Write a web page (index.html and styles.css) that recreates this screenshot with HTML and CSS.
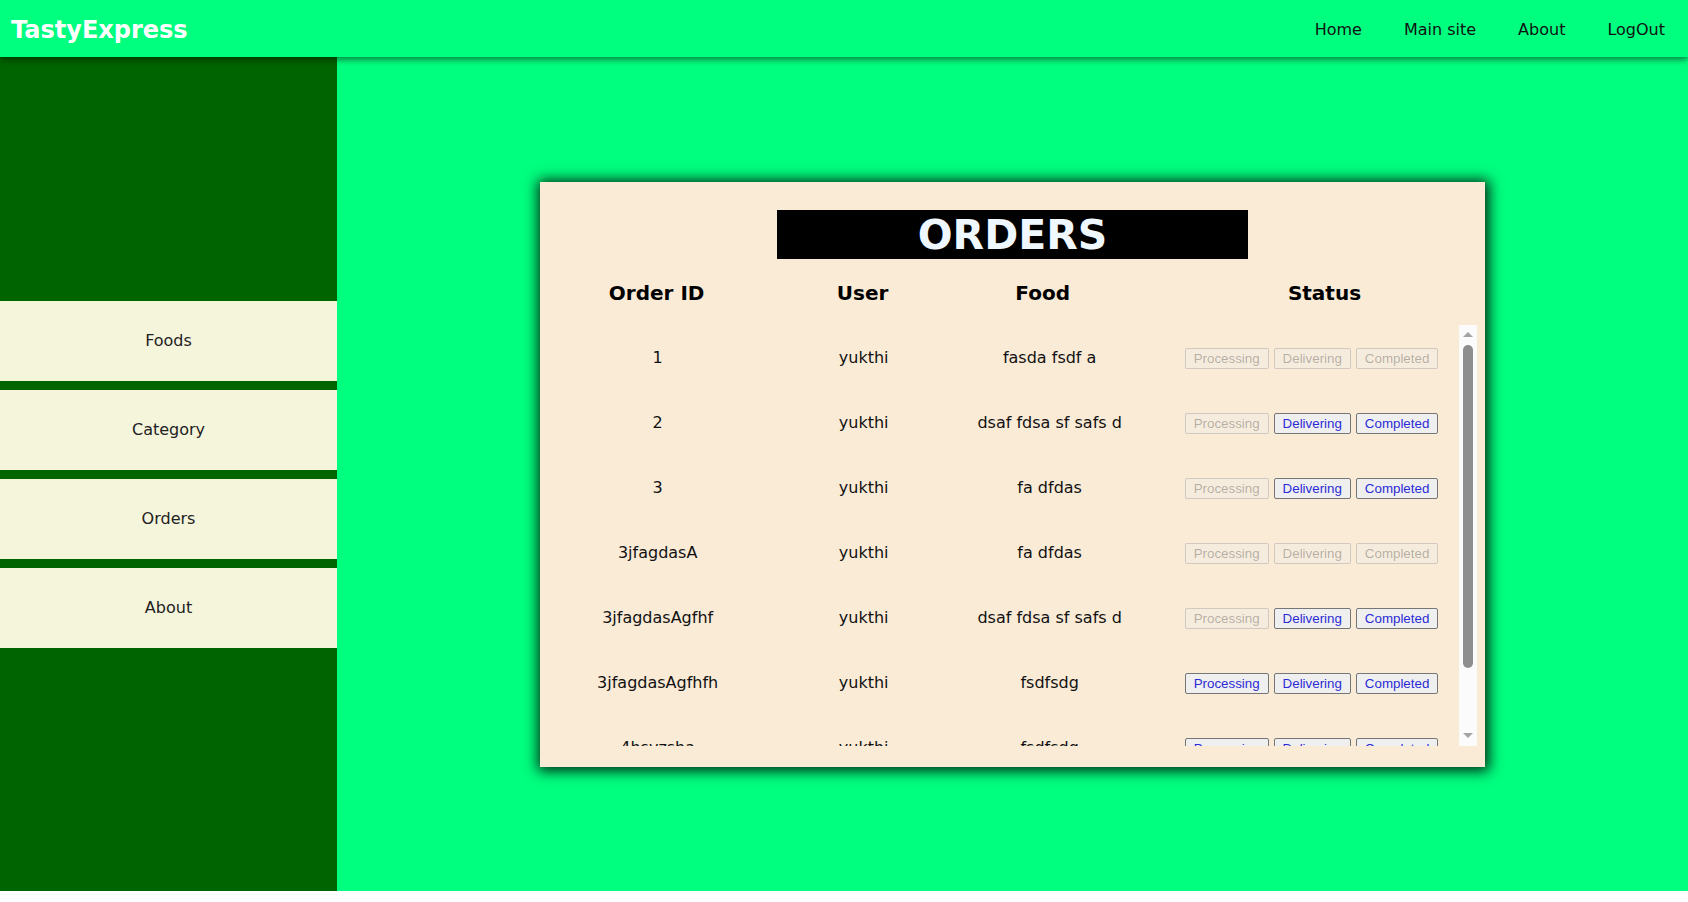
FILE: index.html
```html
<!DOCTYPE html>
<html lang="en">
<head>
<meta charset="utf-8">
<title>TastyExpress - Orders</title>
<link rel="stylesheet" href="styles.css">
</head>
<body>
<header class="topbar">
  <div class="brand">TastyExpress</div>
  <nav class="topnav">
    <a href="#">Home</a>
    <a href="#">Main site</a>
    <a href="#">About</a>
    <a href="#">LogOut</a>
  </nav>
</header>
<div class="layout">
  <aside class="sidebar">
    <a class="side-item" href="#">Foods</a>
    <a class="side-item" href="#">Category</a>
    <a class="side-item" href="#">Orders</a>
    <a class="side-item" href="#">About</a>
  </aside>
  <main class="main">
    <section class="card">
      <h1 class="title">ORDERS</h1>
      <div class="thead">
        <div>Order ID</div>
        <div>User</div>
        <div>Food</div>
        <div class="th-status">Status</div>
      </div>
      <div class="scroll-wrap">
        <div class="tbody">
          <div class="row">
            <div>1</div><div>yukthi</div><div>fasda fsdf a</div>
            <div class="status"><button class="btn" disabled>Processing</button><button class="btn" disabled>Delivering</button><button class="btn" disabled>Completed</button></div>
          </div>
          <div class="row">
            <div>2</div><div>yukthi</div><div>dsaf fdsa sf safs d</div>
            <div class="status"><button class="btn" disabled>Processing</button><button class="btn">Delivering</button><button class="btn">Completed</button></div>
          </div>
          <div class="row">
            <div>3</div><div>yukthi</div><div>fa dfdas</div>
            <div class="status"><button class="btn" disabled>Processing</button><button class="btn">Delivering</button><button class="btn">Completed</button></div>
          </div>
          <div class="row">
            <div>3jfagdasA</div><div>yukthi</div><div>fa dfdas</div>
            <div class="status"><button class="btn" disabled>Processing</button><button class="btn" disabled>Delivering</button><button class="btn" disabled>Completed</button></div>
          </div>
          <div class="row">
            <div>3jfagdasAgfhf</div><div>yukthi</div><div>dsaf fdsa sf safs d</div>
            <div class="status"><button class="btn" disabled>Processing</button><button class="btn">Delivering</button><button class="btn">Completed</button></div>
          </div>
          <div class="row">
            <div>3jfagdasAgfhfh</div><div>yukthi</div><div>fsdfsdg</div>
            <div class="status"><button class="btn">Processing</button><button class="btn">Delivering</button><button class="btn">Completed</button></div>
          </div>
          <div class="row">
            <div>4hsvzsha</div><div>yukthi</div><div>fsdfsdg</div>
            <div class="status"><button class="btn">Processing</button><button class="btn">Delivering</button><button class="btn">Completed</button></div>
          </div>
          <div class="row">
            <div>4hsvzshag</div><div>yukthi</div><div>fa dfdas</div>
            <div class="status"><button class="btn">Processing</button><button class="btn">Delivering</button><button class="btn">Completed</button></div>
          </div>
        </div>
        <div class="scrollbar" aria-hidden="true">
          <span class="sb-arrow sb-up"></span>
          <span class="sb-thumb"></span>
          <span class="sb-arrow sb-down"></span>
        </div>
      </div>
    </section>
  </main>
</div>
</body>
</html>
```
FILE: styles.css
```css
html, body {
  margin: 0;
  padding: 0;
  background: #ffffff;
  font-family: "DejaVu Sans", Verdana, sans-serif;
}

.topbar {
  position: relative;
  z-index: 2;
  height: 57px;
  background: #00ff7f;
  display: flex;
  align-items: center;
  justify-content: space-between;
  box-shadow: 0 3px 6px rgba(0, 0, 0, 0.45);
}

.brand {
  padding-left: 11px;
  font-size: 24px;
  font-weight: bold;
  color: #ffffff;
  padding-top: 2px;
}

.topnav {
  display: flex;
  gap: 42px;
  padding-right: 23px;
  padding-top: 2px;
}

.topnav a {
  color: #111111;
  font-size: 16px;
  text-decoration: none;
}

.layout {
  display: flex;
  height: 834px;
}

.sidebar {
  width: 337px;
  flex: none;
  background: #006400;
  display: flex;
  flex-direction: column;
  justify-content: center;
  gap: 9px;
}

.side-item {
  height: 80px;
  background: #f5f5dc;
  display: flex;
  align-items: center;
  justify-content: center;
  color: #222222;
  font-size: 16px;
  text-decoration: none;
}

.main {
  flex: 1;
  background: #00ff7f;
  display: flex;
  align-items: center;
  justify-content: center;
}

.card {
  width: 70%;
  height: 585px;
  box-sizing: border-box;
  padding: 28px 8px 21px;
  background: #faebd7;
  display: flex;
  flex-direction: column;
  box-shadow: 1px 1px 13px 3px rgba(0, 0, 0, 0.85);
}

.title {
  margin: 0 auto;
  width: 471px;
  height: 49px;
  background: #000000;
  color: #f0f8ff;
  font-size: 41px;
  font-weight: bold;
  line-height: 51px;
  text-align: center;
}

.thead {
  height: 66px;
  flex: none;
  display: grid;
  grid-template-columns: 218px 194px 166px 1fr;
  align-items: center;
  text-align: center;
  font-size: 20px;
  font-weight: bold;
  color: #000000;
  padding-top: 2px;
  box-sizing: border-box;
}

.th-status {
  padding-left: 46px;
}

.scroll-wrap {
  flex: 1;
  min-height: 0;
  display: flex;
}

.tbody {
  flex: 1;
  overflow: hidden;
}

.row {
  height: 65px;
  display: grid;
  grid-template-columns: 220px 192px 180px 1fr;
  align-items: center;
  text-align: center;
  font-size: 16px;
  color: #111111;
}

.status {
  display: flex;
  gap: 5px;
  padding-left: 45px;
}

.btn {
  font-family: "Liberation Sans", Arial, sans-serif;
  font-size: 13.333px;
  line-height: 15px;
  margin-top: 2px;
  padding: 2px 8px;
  border-radius: 2px;
  border: 1px solid rgba(118, 118, 118, 0.3);
  background: rgba(239, 239, 239, 0.3);
  color: rgba(16, 16, 16, 0.3);
}

.btn:enabled {
  color: #2b2bd6;
  background: #efefef;
  border-color: #767676;
}

.scrollbar {
  width: 18px;
  flex: none;
  background: #fbfbfb;
  display: flex;
  flex-direction: column;
  align-items: center;
}

.sb-arrow {
  width: 18px;
  height: 17px;
  flex: none;
  display: flex;
  justify-content: center;
}

.sb-arrow::before {
  content: "";
  width: 0;
  height: 0;
  border-left: 5px solid transparent;
  border-right: 5px solid transparent;
}

.sb-up {
  align-items: flex-start;
}

.sb-up::before {
  margin-top: 7px;
  border-bottom: 5px solid #a3a3a3;
}

.sb-down {
  margin-top: auto;
  align-items: flex-end;
}

.sb-down::before {
  margin-bottom: 8px;
  border-top: 5px solid #a3a3a3;
}

.sb-thumb {
  width: 10px;
  height: 323px;
  margin-top: 3px;
  background: #8e8e8e;
  border-radius: 5px;
}
```
